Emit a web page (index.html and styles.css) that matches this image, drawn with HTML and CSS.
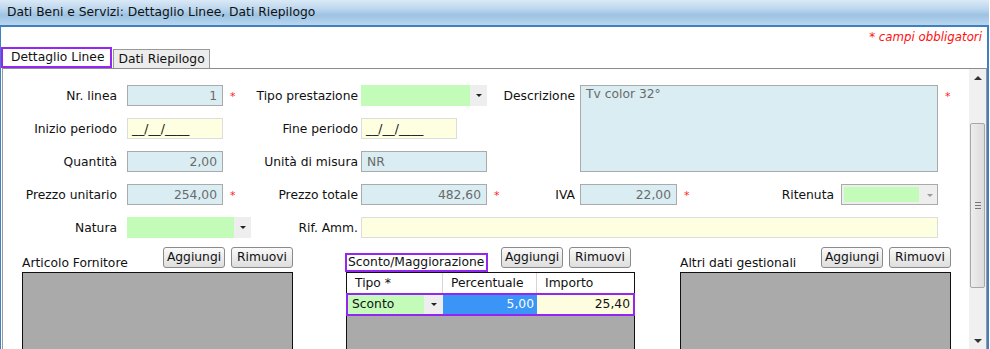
FILE: index.html
```html
<!DOCTYPE html>
<html lang="it">
<head>
    <meta charset="UTF-8">
    <title>Dati Beni e Servizi</title>
    <link rel="stylesheet" href="styles.css">
</head>
<body>
    <div class="window">
        <div class="title-bar">Dati Beni e Servizi: Dettaglio Linee, Dati Riepilogo</div>
        <div class="required-note">* campi obbligatori</div>

        <div class="tabs">
            <div class="tab tab-active">Dettaglio Linee</div>
            <div class="tab">Dati Riepilogo</div>
        </div>

        <div class="tab-content">
            <div class="form-area">
                <div class="form-grid">
                    <!-- riga 1 -->
                    <div class="label l1 r1">Nr. linea</div>
                    <div class="field ro num c2 r1">1</div>
                    <div class="star c3 r1">*</div>
                    <div class="label l4 r1">Tipo prestazione</div>
                    <div class="combo c5 r1"><span class="combo-value"></span><span class="combo-arrow"></span></div>
                    <div class="label l7 r1">Descrizione</div>
                    <div class="field ro area desc">Tv color 32°</div>
                    <div class="star c12 r1">*</div>

                    <!-- riga 2 -->
                    <div class="label l1 r2">Inizio periodo</div>
                    <div class="field date c2 r2">__/__/____</div>
                    <div class="label l4 r2">Fine periodo</div>
                    <div class="field date short c5 r2">__/__/____</div>

                    <!-- riga 3 -->
                    <div class="label l1 r3">Quantità</div>
                    <div class="field ro num c2 r3">2,00</div>
                    <div class="label l4 r3">Unità di misura</div>
                    <div class="field ro c5 r3">NR</div>

                    <!-- riga 4 -->
                    <div class="label l1 r4">Prezzo unitario</div>
                    <div class="field ro num c2 r4">254,00</div>
                    <div class="star c3 r4">*</div>
                    <div class="label l4 r4">Prezzo totale</div>
                    <div class="field ro num c5 r4">482,60</div>
                    <div class="star c6 r4">*</div>
                    <div class="label l7 r4">IVA</div>
                    <div class="field ro num c8 r4">22,00</div>
                    <div class="star c9 r4">*</div>
                    <div class="label l10 r4">Ritenuta</div>
                    <div class="combo combo-disabled c11 r4"><span class="combo-value"></span><span class="combo-arrow"></span></div>

                    <!-- riga 5 -->
                    <div class="label l1 r5">Natura</div>
                    <div class="combo combo-natura c2 r5"><span class="combo-value"></span><span class="combo-arrow"></span></div>
                    <div class="label l4 r5">Rif. Amm.</div>
                    <div class="field date rif r5"></div>
                </div>

                <div class="sections">
                    <div class="section sec-left">
                        <div class="section-head">
                            <span class="section-title">Articolo Fornitore</span>
                            <div class="btn-group">
                                <button class="btn">Aggiungi</button>
                                <button class="btn">Rimuovi</button>
                            </div>
                        </div>
                        <div class="list-box"></div>
                    </div>

                    <div class="section sec-mid">
                        <div class="section-head">
                            <span class="section-title highlight">Sconto/Maggiorazione</span>
                            <div class="btn-group">
                                <button class="btn">Aggiungi</button>
                                <button class="btn">Rimuovi</button>
                            </div>
                        </div>
                        <div class="list-box">
                            <div class="grid-head">
                                <div class="gcell g1">Tipo *</div>
                                <div class="gcell g2">Percentuale</div>
                                <div class="gcell g3">Importo</div>
                            </div>
                            <div class="grid-row">
                                <div class="gcell g1 cell-tipo"><span>Sconto</span><span class="combo-arrow"></span></div>
                                <div class="gcell g2 cell-perc">5,00</div>
                                <div class="gcell g3 cell-imp">25,40</div>
                            </div>
                        </div>
                    </div>

                    <div class="section sec-right">
                        <div class="section-head">
                            <span class="section-title">Altri dati gestionali</span>
                            <div class="btn-group">
                                <button class="btn">Aggiungi</button>
                                <button class="btn">Rimuovi</button>
                            </div>
                        </div>
                        <div class="list-box"></div>
                    </div>
                </div>
            </div>

            <div class="scrollbar">
                <div class="scroll-up"></div>
                <div class="scroll-track">
                    <div class="scroll-thumb"><span class="grip"></span></div>
                </div>
                <div class="scroll-down"></div>
            </div>
        </div>
    </div>
</body>
</html>
```

FILE: styles.css
```css
body {
    margin: 0;
    padding: 0;
    width: 990px;
    height: 349px;
    overflow: hidden;
    background-color: white;
    font-family: "DejaVu Sans", Verdana, sans-serif;
    font-size: 12.3px;
    color: #111;
}

.window {
    height: 349px;
    border-left: 2px solid #3f80c2;
    border-right: 2px solid #3f80c2;
    display: flex;
    flex-direction: column;
    box-sizing: border-box;
    width: 990px;
    margin-left: -1px;
}

.title-bar {
    height: 27px;
    line-height: 25px;
    padding-left: 7px;
    margin-left: -1px;
    margin-right: -2px;
    border-bottom: 2px solid #3f80c2;
    background: linear-gradient(to bottom, #dbe9f6 0%, #bcd7ee 35%, #9dc3e3 60%, #b9d6ee 100%);
    box-sizing: border-box;
}

.required-note {
    height: 20px;
    line-height: 20px;
    text-align: right;
    padding-right: 5px;
    color: #ff1010;
    font-style: italic;
    font-size: 11.8px;
}

.tabs {
    display: flex;
    align-items: flex-end;
    height: 21px;
}

.tab {
    height: 19px;
    line-height: 18px;
    padding: 0 4px;
    border: 1px solid #999;
    border-bottom: none;
    background-color: #ececec;
    box-sizing: border-box;
}

.tab-active {
    height: 21px;
    line-height: 17px;
    padding: 0 6px 0 8px;
    background-color: white;
    border: 2px solid #9326f2;
    margin-right: 1px;
}

.tab-content {
    flex: 1;
    display: flex;
    border-top: 1px solid #8c8c8c;
    border-left: 1px solid #9a9a9a;
    border-right: 1px solid #9a9a9a;
    margin-left: 1px;
    overflow: hidden;
}

.form-area {
    flex: 1;
}

.form-grid {
    display: grid;
    grid-template-columns: 124px 96px 20px 118px 126px 15px 78px 97px 22px 142px 97px 16px;
    grid-auto-rows: 21px;
    row-gap: 12px;
    padding-top: 16px;
}

.r1 { grid-row: 1; }
.r2 { grid-row: 2; }
.r3 { grid-row: 3; }
.r4 { grid-row: 4; }
.r5 { grid-row: 5; }

.c2 { grid-column: 2; }
.c3 { grid-column: 3; }
.c5 { grid-column: 5; }
.c6 { grid-column: 6; }
.c8 { grid-column: 8; }
.c9 { grid-column: 9; }
.c11 { grid-column: 11; }
.c12 { grid-column: 12; }

.label {
    line-height: 22px;
    text-align: right;
    white-space: nowrap;
}

.l1 { grid-column: 1; padding-right: 10px; }
.l4 { grid-column: 4; padding-right: 3px; }
.l7 { grid-column: 7; padding-right: 5px; }
.l10 { grid-column: 10; padding-right: 7px; }

.star {
    color: #ff2020;
    font-size: 11px;
    line-height: 23px;
    padding-left: 7px;
}

.field {
    box-sizing: border-box;
    border: 1px solid #aaa;
    height: 21px;
    line-height: 20px;
    padding: 0 5px;
    white-space: nowrap;
}

.ro {
    background-color: #daedf2;
    color: #6a6a6a;
}

.num {
    text-align: right;
}

.date {
    background-color: #fefee0;
    border-color: #ddd;
    padding-left: 4px;
}

.short {
    width: 96px;
}

.desc {
    grid-column: 8 / 12;
    grid-row: 1 / 4;
    height: auto;
    line-height: 17px;
}

.rif {
    grid-column: 5 / 12;
}

.combo {
    display: flex;
    height: 21px;
    width: 126px;
    box-sizing: border-box;
}

.combo-value {
    flex: 1;
    background-color: #c3fcb9;
}

.combo-arrow {
    width: 17px;
    background-color: #eeeeee;
    position: relative;
}

.combo-arrow::after {
    content: "";
    position: absolute;
    left: 6px;
    top: 9px;
    border-left: 3px solid transparent;
    border-right: 3px solid transparent;
    border-top: 3px solid #222;
}

.combo-natura {
    width: 124px;
}

.combo-disabled {
    width: 97px;
    border: 1px solid #aaa;
    background-color: #eeeeee;
    padding: 2px 0 2px 2px;
}

.combo-disabled .combo-value {
    flex: none;
    width: 75px;
}

.combo-disabled .combo-arrow::after {
    top: 7px;
    left: 8px;
    border-top-color: #999;
}

.sections {
    display: flex;
    margin-top: 9px;
}

.section {
    display: flex;
    flex-direction: column;
}

.sec-left {
    width: 271px;
    margin-left: 19px;
}

.sec-mid {
    width: 289px;
    margin-left: 53px;
}

.sec-right {
    width: 271px;
    margin-left: 45px;
}

.section-head {
    display: flex;
    justify-content: space-between;
    height: 25px;
}

.section-title {
    align-self: flex-end;
    line-height: 16px;
    margin-bottom: 1px;
    white-space: nowrap;
}

.section-title.highlight {
    border: 2px solid #9326f2;
    line-height: 15px;
    padding: 0 2px 0 1px;
    margin-left: -1px;
    margin-bottom: 0;
}

.btn-group {
    display: flex;
    gap: 6px;
    align-self: flex-start;
}

.sec-mid .btn-group {
    margin-right: 4px;
}

.btn {
    width: 62px;
    height: 21px;
    padding: 0;
    font-family: "DejaVu Sans", Verdana, sans-serif;
    font-size: 12.3px;
    color: #111;
    border: 1px solid #8a8a8a;
    border-radius: 3px;
    background: linear-gradient(to bottom, #fafafa 0%, #ececec 50%, #dedede 100%);
    line-height: 17px;
}

.list-box {
    height: 130px;
    background-color: #aaaaaa;
    border: 1px solid #111;
}

.grid-head {
    display: flex;
    height: 20px;
    background-color: white;
}

.grid-head .gcell {
    border-right: 1px solid #d6d6d6;
    line-height: 20px;
    padding-left: 8px;
}

.gcell {
    box-sizing: border-box;
}

.g1 { width: 96px; }
.g2 { width: 94px; }
.g3 { width: 97px; border-right: none !important; }

.grid-row {
    display: flex;
    height: 23px;
    border: 2px solid #9326f2;
    margin-left: -1px;
    margin-right: -1px;
    box-sizing: border-box;
}

.grid-row .gcell {
    line-height: 19px;
}

.cell-tipo {
    display: flex;
    background-color: #c3fcb9;
    padding-left: 4px;
    width: 95px;
}

.cell-tipo span:first-child {
    flex: 1;
}

.cell-tipo .combo-arrow {
    width: 19px;
}

.cell-tipo .combo-arrow::after {
    top: 8px;
    left: 7px;
}

.cell-perc {
    background-color: #3a95f6;
    color: white;
    text-align: right;
    padding-right: 3px;
}

.cell-imp {
    background-color: #fffde0;
    text-align: right;
    padding-right: 3px;
    flex: 1;
}

.scrollbar {
    width: 17px;
    background-color: #f0f0f0;
    display: flex;
    flex-direction: column;
}

.scroll-up,
.scroll-down {
    height: 17px;
    position: relative;
}

.scroll-up::after,
.scroll-down::after {
    content: "";
    position: absolute;
    left: 5px;
    border-left: 4px solid transparent;
    border-right: 4px solid transparent;
}

.scroll-up::after {
    top: 7px;
    border-bottom: 4px solid #333;
}

.scroll-down::after {
    top: 7px;
    border-top: 4px solid #333;
}

.scroll-track {
    flex: 1;
    padding-top: 37px;
}

.scroll-thumb {
    margin: 0 1px;
    height: 165px;
    box-sizing: border-box;
    border: 1px solid #a8a8a8;
    border-radius: 2px;
    background: linear-gradient(to right, #ededed, #dcdcdc);
    position: relative;
}

.grip {
    position: absolute;
    left: 4px;
    top: 78px;
    width: 6px;
    height: 5px;
    border-top: 1px solid #777;
    border-bottom: 1px solid #777;
}

.grip::after {
    content: "";
    position: absolute;
    left: 0;
    top: 2px;
    width: 6px;
    border-top: 1px solid #777;
}
```
